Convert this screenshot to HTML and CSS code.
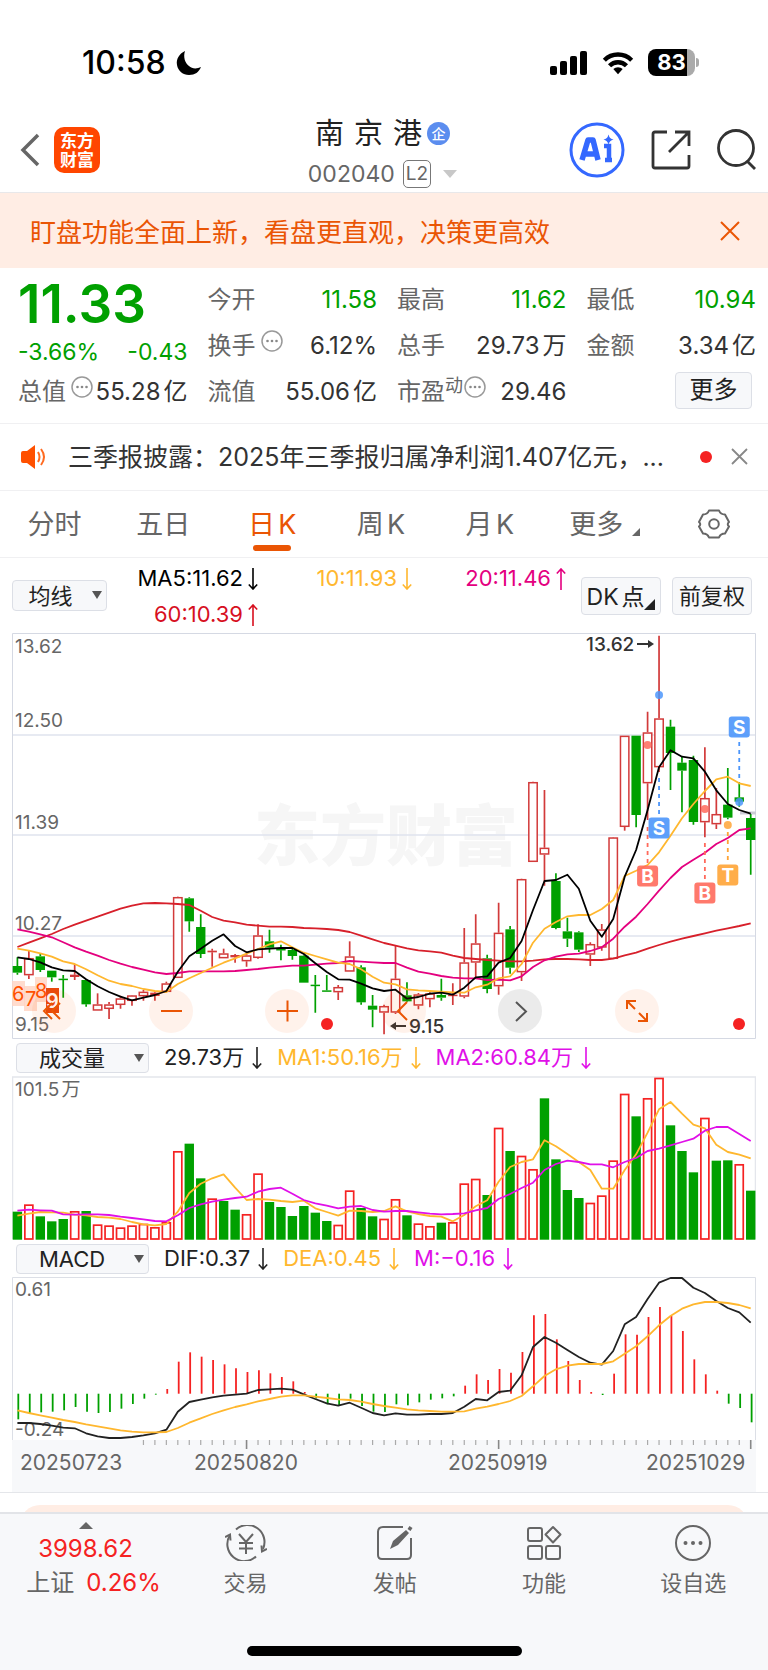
FILE: index.html
```html
<!DOCTYPE html>
<html lang="zh-CN">
<head>
<meta charset="utf-8">
<meta name="viewport" content="width=device-width, initial-scale=1">
<title>南京港 002040</title>
<link rel="stylesheet" href="styles.css">
</head>
<body>
<div class="app">
  <div class="status">
    <div class="status-side">
      <span class="clock">10:58</span>
      <svg width="26" height="26" viewBox="0 0 26 26"><path d="M9 1C3 4 0 9 1 15c1 6 6 10 12 10 6 0 10-3 12-8-4 2-9 2-12-1C9 13 7 7 9 1z" fill="#000"/></svg>
    </div>
    <div class="status-side status-right">
      <svg width="38" height="24" viewBox="0 0 38 24"><rect x="0" y="15" width="7" height="9" rx="2"/><rect x="10" y="10" width="7" height="14" rx="2"/><rect x="20" y="5" width="7" height="19" rx="2"/><rect x="30" y="0" width="7" height="24" rx="2"/></svg>
      <svg width="32" height="24" viewBox="0 0 34 25"><g fill="none" stroke="#000" stroke-width="4.6"><path d="M2.500 9.500a20.500 20.500 0 0 1 29 0"/><path d="M8 15.500a12.500 12.500 0 0 1 18 0"/></g><path d="M17 24.500l-5-5.500a7 7 0 0 1 10 0z"/></svg>
      <div class="battery"><span class="battery-level">83</span></div>
    </div>
  </div>

  <header class="header">
    <div class="header-left">
      <button class="icon-btn" aria-label="返回"><svg width="20" height="34" viewBox="0 0 20 34"><path d="M18 2L3 17l15 15" fill="none" stroke="#666" stroke-width="3.500"/></svg></button>
      <div class="logo">东方<br>财富</div>
    </div>
    <div class="title-block">
      <h1 class="title"><span>南</span><span>京</span><span>港</span><i class="corp">企</i></h1>
      <div class="code"><span>002040</span><span class="level">L2</span><svg width="14" height="8" viewBox="0 0 14 8"><path d="M0 0h14L7 8z" fill="#c8c8c8"/></svg></div>
    </div>
    <div class="header-right">
      <button class="icon-btn" aria-label="Ai"><svg width="56" height="56" viewBox="0 0 56 56"><circle cx="28" cy="28" r="26" fill="#fff" stroke="#3468ff" stroke-width="3"/><path d="M13 38L19 18h5l5 20M15.500 32h11" fill="none" stroke="#3468ff" stroke-width="5.500" stroke-linejoin="round"/><path d="M35 24h5v14h3M36 38h4" fill="none" stroke="#3468ff" stroke-width="4.500"/><path d="M39.500 12.500q1 4.500 5 5-4 1-5 5-1-4-5-5 4-.5 5-5z" fill="#3468ff"/></svg></button>
      <button class="icon-btn" aria-label="分享"><svg width="40" height="40" viewBox="0 0 40 40"><g fill="none" stroke="#333" stroke-width="2.800"><path d="M16 2H4Q2 2 2 4v32q0 2 2 2h32q2 0 2-2V25"/><path d="M24 2h14v14M37 3L18 22"/></g></svg></button>
      <button class="icon-btn" aria-label="搜索"><svg width="40" height="42" viewBox="0 0 40 42"><g fill="none" stroke="#333" stroke-width="2.800"><circle cx="19" cy="19" r="17.500"/><path d="M30 32l8 8"/></g></svg></button>
    </div>
  </header>

  <div class="banner">
    <span>盯盘功能全面上新，看盘更直观，决策更高效</span>
    <button class="icon-btn" aria-label="关闭"><svg width="20" height="20" viewBox="0 0 20 20"><path d="M1 1l18 18M19 1L1 19" stroke="#ea5504" stroke-width="2"/></svg></button>
  </div>

  <section class="quote">
    <div class="price-cell">
      <div class="price">11.33</div>
      <div class="change"><span>-3.66%</span><span>-0.43</span></div>
    </div>
    <div class="cell"><span class="label">今开</span><span class="down">11.58</span></div>
    <div class="cell"><span class="label">最高</span><span class="down">11.62</span></div>
    <div class="cell"><span class="label">最低</span><span class="down">10.94</span></div>
    <div class="cell"><span class="label">换手<svg class="info" width="22" height="22" viewBox="0 0 22 22"><use href="#dots"/></svg></span><span>6.12%</span></div>
    <div class="cell"><span class="label">总手</span><span>29.73万</span></div>
    <div class="cell"><span class="label">金额</span><span>3.34亿</span></div>
    <div class="cell"><span class="label">总值<svg class="info" width="22" height="22" viewBox="0 0 22 22"><use href="#dots"/></svg></span><span>55.28亿</span></div>
    <div class="cell"><span class="label">流值</span><span>55.06亿</span></div>
    <div class="cell"><span class="label">市盈<small>动</small><svg class="info tight" width="22" height="22" viewBox="0 0 22 22"><g id="dots"><circle cx="11" cy="11" r="10" fill="none" stroke="#999" stroke-width="1.500"/><circle cx="6.500" cy="11" r="1.300" fill="#888"/><circle cx="11" cy="11" r="1.300" fill="#888"/><circle cx="15.500" cy="11" r="1.300" fill="#888"/></g></svg></span><span>29.46</span></div>
    <div class="cell cell-more"><button class="box-btn more">更多</button></div>
  </section>

  <div class="notice">
    <svg width="26" height="24" viewBox="0 0 26 24"><path d="M1 8q0-2 2-2h4l8-6v24l-8-6H3q-2 0-2-2z" fill="#ff5000"/><path d="M18 7q3 5 0 10M21 4q6 8 0 16" fill="none" stroke="#ff6a20" stroke-width="2"/></svg>
    <a class="notice-text" href="#">三季报披露：2025年三季报归属净利润1.407亿元，...</a>
    <span class="dot"></span>
    <button class="icon-btn" aria-label="关闭"><svg width="17" height="17" viewBox="0 0 17 17"><path d="M1 1l15 15M16 1L1 16" stroke="#888" stroke-width="1.800"/></svg></button>
  </div>

  <nav class="tabs">
    <button class="tab">分时</button>
    <button class="tab">五日</button>
    <button class="tab active">日K</button>
    <button class="tab">周K</button>
    <button class="tab">月K</button>
    <button class="tab tab-more">更多<svg width="8" height="8" viewBox="0 0 8 8"><path d="M8 0v8H0z" fill="#666"/></svg></button>
    <button class="tab tab-gear" aria-label="设置"><svg width="32" height="30" viewBox="0 0 32 30"><g fill="none" stroke="#666" stroke-width="2"><path d="M11 1.500h10q1.500 4 6 4l4 7.500q-2.500 2 0 4.500l-4 7q-4.500 0-6 4H11q-1.500-4-6-4l-4-7q2.500-2.500 0-4.500l4-7.500q4.500 0 6-4z" stroke-linejoin="round"/><circle cx="16" cy="15" r="4.800"/></g></svg></button>
  </nav>

  <div class="ma-row">
    <div class="pick pick-small"><select aria-label="均线"><option>均线</option></select></div>
    <div class="ma-values">
      <span class="c-black">MA5:11.62<svg class="arrow" viewBox="0 0 10 22"><path id="arrow-down" d="M5 0v21M.8 16.500L5 21l4.200-4.500"/></svg></span>
      <span class="c-orange">10:11.93<svg class="arrow" viewBox="0 0 10 22"><use href="#arrow-down"/></svg></span>
      <span class="c-pink">20:11.46<svg class="arrow" viewBox="0 0 10 22"><path id="arrow-up" d="M5 22V1M.8 5.500L5 1l4.200 4.500"/></svg></span>
      <span class="c-red">60:10.39<svg class="arrow" viewBox="0 0 10 22"><use href="#arrow-up"/></svg></span>
    </div>
    <button class="box-btn dk">DK点<svg width="11" height="11" viewBox="0 0 11 11"><path d="M11 0v11H0z" fill="#222"/></svg></button>
    <button class="box-btn fq">前复权</button>
  </div>

  <div class="chart">
    <svg id="kline" viewBox="0 0 744 406">
      <text class="watermark" x="242" y="227">东方财富</text>
      <g stroke="#dfe3ee" stroke-width="1.500"><path d="M0 102h744M0 202h744M0 303h744"/></g>
      <path d="M.5.5h743v405H.5z" fill="none" stroke="#d5d9e3"/>
      <g class="axis-text">
        <text x="3" y="20">13.62</text><text x="3" y="94">12.50</text><text x="3" y="196">11.39</text><text x="3" y="297">10.27</text><text x="3" y="398">9.15</text>
      </g>
      <path d="M728 180h16" stroke="#ccccd6" stroke-width="3"/>
      <g id="kline-plot"></g>
      <g class="extreme">
        <text x="574" y="18">13.62</text><path d="M625 11h14" stroke="#333" stroke-width="2"/><path d="M636 7l6 4-6 4z"/>
        <path d="M380 393h14" stroke="#333" stroke-width="2"/><path d="M384 389l-6 4 6 4z"/><text x="397" y="400">9.15</text>
      </g>
      <g id="signals"></g>
      <g class="nine">
        <g fill="#ffd3c2" fill-opacity=".8"><rect x="0" y="348" width="13" height="25"/><rect x="12" y="353" width="13" height="25"/><rect x="23" y="344" width="12" height="25"/></g>
        <rect x="34" y="355" width="13" height="25" fill="#e8480c"/>
        <text x="0" y="368">6</text><text x="13" y="373">7</text><text x="23" y="365">8</text><text x="34" y="375" class="nine-last">9</text>
      </g>
      <g fill="#f52222"><circle cx="315" cy="391" r="6"/><circle cx="727" cy="391" r="6"/></g>
    </svg>
    <div class="tools">
      <button class="tool" aria-label="快退"><svg width="44" height="44" viewBox="0 0 44 44"><path d="M20 14l-8 8 8 8M28 14l-8 8 8 8"/></svg></button>
      <button class="tool" aria-label="缩小"><svg width="44" height="44" viewBox="0 0 44 44"><path d="M12 22h21"/></svg></button>
      <button class="tool" aria-label="放大"><svg width="44" height="44" viewBox="0 0 44 44"><path d="M12 22h21M22.500 11.500v21"/></svg></button>
      <button class="tool" aria-label="左移"><svg width="44" height="44" viewBox="0 0 44 44"><path d="M25 13l-9 9 9 9"/></svg></button>
      <button class="tool tool-grey" aria-label="右移"><svg width="44" height="44" viewBox="0 0 44 44"><path d="M18 13l10 9.500L18 32"/></svg></button>
      <button class="tool" aria-label="全屏"><svg width="44" height="44" viewBox="0 0 44 44"><path d="M12 20v-8h9M12 12l8 8M32 24v8h-9M32 32l-8-8"/></svg></button>
    </div>
  </div>

  <div class="sub-row">
    <div class="pick"><select aria-label="副图指标一"><option>成交量</option></select></div>
    <span class="c-dark">29.73万<svg class="arrow" viewBox="0 0 10 22"><use href="#arrow-down"/></svg></span>
    <span class="c-orange">MA1:50.16万<svg class="arrow" viewBox="0 0 10 22"><use href="#arrow-down"/></svg></span>
    <span class="c-violet">MA2:60.84万<svg class="arrow" viewBox="0 0 10 22"><use href="#arrow-down"/></svg></span>
  </div>
  <div class="chart">
    <svg id="volume" viewBox="0 0 744 164">
      <path d="M.5 163V1h743v162" fill="none" stroke="#e4e6ec" stroke-width="1.500"/>
      <g id="volume-plot"></g>
      <text class="axis-text" x="3" y="20">101.5万</text>
    </svg>
  </div>
  <div class="sub-row">
    <div class="pick"><select aria-label="副图指标二"><option>MACD</option></select></div>
    <span class="c-dark">DIF:0.37<svg class="arrow" viewBox="0 0 10 22"><use href="#arrow-down"/></svg></span>
    <span class="c-orange">DEA:0.45<svg class="arrow" viewBox="0 0 10 22"><use href="#arrow-down"/></svg></span>
    <span class="c-violet">M:−0.16<svg class="arrow" viewBox="0 0 10 22"><use href="#arrow-down"/></svg></span>
  </div>
  <div class="chart">
    <svg id="macd" viewBox="0 0 744 163">
      <path d="M.5 163V.5h743V163" fill="none" stroke="#dcdfe6"/>
      <g class="axis-text"><text x="3" y="19">0.61</text><text x="3" y="159">-0.24</text></g>
      <g id="macd-plot"></g>
    </svg>
    <svg class="dates" id="dates" viewBox="0 0 744 52">
      <text x="8" y="30">20250723</text><text x="182" y="30">20250820</text><text x="436" y="30">20250919</text><text x="634" y="30">20251029</text>
    </svg>
  </div>

  <div class="peek"><div class="peek-card"></div></div>

  <footer class="footer">
    <div class="foot-items">
      <a class="index" href="#">
        <svg width="14" height="7" viewBox="0 0 14 7"><path d="M7 0l7 7H0z" fill="#666"/></svg>
        <span class="up">3998.62</span>
        <span class="index-row"><span>上证</span><span class="up">0.26%</span></span>
      </a>
      <a class="foot" href="#"><svg width="42" height="36" viewBox="0 0 42 36"><g fill="none" stroke="#666" stroke-width="2"><path d="M11 4.500A17 17 0 0 1 38 24M31 31.500A17 17 0 0 1 5 10"/><path d="M0 12l5-2.500.5 6M42 24l-5 2.500-.5-6"/><path d="M14 9l7 8 7-8M21 17v12M14 18h14M14 23.500h14"/></g></svg>交易</a>
      <a class="foot" href="#"><svg width="42" height="36" viewBox="0 0 42 36"><g fill="none" stroke="#666" stroke-width="2"><path d="M29 2H9Q4 2 4 7v23q0 4 4 4h25q4 0 4-4V13"/></g><path d="M16 24l3-8L32 5l3 3-11 12zM33.500 4l2-3 3 2-2 3z" fill="#666"/></svg>发帖</a>
      <a class="foot" href="#"><svg width="42" height="36" viewBox="0 0 42 36"><g fill="none" stroke="#666" stroke-width="2"><rect x="5" y="3" width="14" height="13" rx="2"/><rect x="5" y="21" width="14" height="13" rx="2"/><rect x="23" y="21" width="14" height="13" rx="2"/><path d="M30 2l7.500 7.500L30 17.500 22.500 9.500z" stroke-linejoin="round"/></g></svg>功能</a>
      <a class="foot" href="#"><svg width="42" height="36" viewBox="0 0 42 36"><circle cx="21" cy="18" r="17" fill="none" stroke="#666" stroke-width="2"/><g fill="#666"><circle cx="13.500" cy="18" r="2"/><circle cx="21" cy="18" r="2"/><circle cx="28.500" cy="18" r="2"/></g></svg>设自选</a>
    </div>
    <div class="home"></div>
  </footer>
</div>
<script src="charts.js"></script>
</body>
</html>
```

FILE: styles.css
```css
* { box-sizing: border-box; }
body {
  margin: 0;
  background: #fff;
  color: #333;
  font-family: Inter, "Noto Sans CJK SC", sans-serif;
  font-size: 24px;
}
button, select { font: inherit; color: inherit; }
button { border: 0; padding: 0; background: none; }
a { color: inherit; text-decoration: none; }
svg { display: block; flex: none; }
.app { display: flex; flex-direction: column; min-height: 100vh; }

.status { display: flex; justify-content: space-between; align-items: center; height: 100px; padding: 25px 73px 0 82px; }
.status-side { display: flex; align-items: center; gap: 10px; }
.status-right { gap: 14px; }
.clock { font-size: 32px; font-weight: 500; color: #000; }
.battery { position: relative; width: 47px; height: 27px; border-radius: 8px; background: linear-gradient(90deg, #000 39px, #aaa 39px); }
.battery::after { content: ""; position: absolute; right: -4px; top: 9px; width: 3px; height: 9px; border-radius: 0 3px 3px 0; background: #aaa; }
.battery-level { display: block; color: #fff; font-size: 22px; font-weight: 700; line-height: 27px; text-align: center; }

.header { display: grid; grid-template-columns: 1fr auto 1fr; align-items: center; height: 93px; padding: 8px 11px 0 20px; border-bottom: 1px solid #e8e8ea; }
.header-left, .header-right { display: flex; align-items: center; }
.header-left { gap: 14px; }
.header-right { justify-content: flex-end; gap: 26px; }
.logo { width: 46px; height: 46px; padding-top: 3px; border-radius: 10px; background: #ff4600; color: #fff; font-family: "Noto Sans CJK SC", sans-serif; font-size: 17px; font-weight: 700; line-height: 19px; text-align: center; }
.title-block { display: flex; flex-direction: column; align-items: center; gap: 7px; padding: 2px 12px 0 0; }
.title { display: flex; align-items: center; gap: 10px; margin: 0; font-size: 29px; font-weight: 400; line-height: 38px; color: #222; }
.corp { display: block; width: 23px; height: 23px; margin-left: -5px; border-radius: 50%; background: #5b8def; color: #fff; font-size: 14px; font-style: normal; font-weight: 500; line-height: 23px; text-align: center; }
.code { display: flex; align-items: center; gap: 8px; font-size: 23px; line-height: 28px; color: #666; }
.level { padding: 0 2px; border: 1px solid #777; border-radius: 5px; font-size: 19px; line-height: 26px; }
.code svg { margin-left: 4px; }

.banner { display: flex; justify-content: space-between; align-items: center; height: 75px; padding: 0 28px 0 30px; background: #ffede4; color: #ea5504; font-size: 26px; }

.quote { display: grid; grid-template-columns: repeat(4, 1fr); grid-auto-rows: 46px; column-gap: 20px; padding: 9px 12px 8px 18px; border-bottom: 1px solid #f0f0f2; text-autospace: normal; }
.price-cell { grid-row: span 2; color: #00a000; }
.price { font-size: 53px; font-weight: 600; line-height: 54px; }
.change { display: flex; justify-content: space-between; font-size: 23px; line-height: 42px; }
.cell { display: flex; justify-content: space-between; align-items: center; line-height: 32px; white-space: nowrap; }
.label { display: flex; align-items: center; color: #666; }
.label small { align-self: flex-start; font-size: 18px; line-height: 20px; }
.info { margin: 0 0 10px 5px; }
.info.tight { margin-left: 1px; }
.down { color: #00a000; }
.up { color: #f52222; }
.cell-more { justify-content: flex-end; padding: 0 4px 4px 0; }
.box-btn { border: 1px solid #dcdfe6; border-radius: 4px; background: #f7f8fa; color: #222; font-size: 23px; white-space: nowrap; text-autospace: normal; }
.more { width: 77px; height: 37px; font-size: 24px; line-height: 32px; }

.notice { display: flex; align-items: center; height: 67px; padding: 0 20px 4px; border-bottom: 1px solid #f0f0f2; font-size: 25px; }
.notice svg, .notice .dot { margin-top: 3px; }
.notice-text { flex: 1; margin: 0 30px 0 22px; white-space: nowrap; }
.dot { width: 12px; height: 12px; margin-right: 19px; border-radius: 50%; background: #f52222; }

.tabs { display: flex; align-items: stretch; height: 67px; border-bottom: 1px solid #f0f0f2; color: #666; font-size: 27px; text-autospace: normal; }
.tab { position: relative; flex: 1; padding-bottom: 4px; }
.tab.active { color: #ea5504; }
.tab.active::after { content: ""; position: absolute; left: 50%; bottom: 6px; width: 38px; height: 6px; margin-left: -19px; border-radius: 3px; background: #ea5504; }
.tab-more { display: flex; justify-content: center; align-items: center; gap: 9px; padding-left: 6px; }
.tab-more svg { margin-top: 20px; }
.tab-gear { display: flex; justify-content: center; align-items: center; padding-bottom: 0; }

.ma-row { display: flex; align-items: center; height: 75px; padding: 0 16px 0 12px; font-size: 22px; }
.ma-values { display: grid; grid-template-columns: 122px 1fr 1fr; flex: 1; margin: 0 15px 0 29px; line-height: 36px; text-align: right; white-space: nowrap; }
.dk { display: flex; justify-content: center; align-items: flex-end; width: 80px; height: 38px; line-height: 34px; }
.dk svg { margin-bottom: 4px; }
.fq { width: 80px; height: 38px; margin-left: 11px; font-size: 22px; line-height: 34px; }
.pick { position: relative; width: 133px; height: 30px; }
.pick select { display: block; width: 100%; height: 100%; padding: 0 21px 0 0; border: 1px solid #dcdfe6; border-radius: 4px; background: #f7f8fa; color: #222; font-size: 22px; line-height: 28px; text-align: center; text-align-last: center; appearance: none; }
.pick::after { content: ""; position: absolute; right: 5px; top: 11px; border: 5px solid transparent; border-top: 8px solid #555; border-bottom: 0; pointer-events: none; }
.pick-small { width: 95px; height: 31px; }
.pick-small select { padding-right: 18px; }
.arrow { display: inline-block; width: 10px; height: 22px; margin-left: 5px; vertical-align: -4px; fill: none; stroke: currentColor; stroke-width: 1.600; }
.sub-row .arrow { margin-left: 8px; }

.c-black { color: #000; }
.c-dark { color: #222; }
.c-orange { color: #ffb72e; }
.c-pink { color: #e4007f; }
.c-red { color: #d7101f; }
.c-violet { color: #e010e8; }

.chart { position: relative; margin: 0 12px; }
.chart > svg { width: 100%; }
.axis-text { fill: #666; font-size: 19px; text-autospace: normal; }
.watermark { fill: #f6f6f6; font-size: 66px; font-weight: 900; }
.extreme { fill: #333; font-size: 19px; font-weight: 500; }
.nine { fill: #ff5000; font-size: 20px; }
.nine-last { fill: #fff; font-weight: 600; }
.signal-text { fill: #fff; font-size: 19px; font-weight: 700; text-anchor: middle; }
.tools { position: absolute; left: 20px; right: 97px; bottom: 6px; display: flex; justify-content: space-between; }
.tool { width: 44px; height: 44px; border-radius: 50%; background: rgba(255, 90, 0, 0.08); }
.tool path { fill: none; stroke: #ea5504; stroke-width: 2; }
.tool-grey { background: rgba(0, 0, 0, 0.08); }
.tool-grey path { stroke: #555; }
.sub-row { display: flex; align-items: center; gap: 15px; height: 37px; padding: 0 16px; font-size: 22px; line-height: 37px; white-space: nowrap; }
.dates { background: #f7f8fa; fill: #666; font-size: 21px; }

.peek { flex: 1; min-height: 19px; padding: 12px 20px 0; border-top: 1px solid #e4e6ea; overflow: hidden; }
.peek-card { height: 40px; margin-bottom: -33px; border-radius: 20px; background: #ffede4; }

.footer { position: relative; height: 159px; border-top: 2px solid #e2e4e8; background: #f7f8fa; color: #666; }
.foot-items { display: flex; padding-top: 7px; }
.index { display: flex; flex-direction: column; align-items: center; width: 171px; line-height: 34px; white-space: nowrap; }
.index svg { margin: 1px 0 3px; }
.index-row { display: flex; gap: 12px; padding-left: 16px; }
.foot { display: flex; flex: 1; flex-direction: column; align-items: center; gap: 4px; padding-top: 4px; font-size: 22px; line-height: 36px; }
.home { position: absolute; left: 50%; bottom: 15px; width: 275px; height: 10px; margin-left: -137px; border-radius: 5px; background: #000; }
```

FILE: charts.js
```js
const NS = 'http://www.w3.org/2000/svg';
const STEP = 11.458;
const X0 = 5.4;
const RED = '#d23a3a';
const GREEN = '#00a000';
const xAt = i => X0 + i * STEP;

function add(parent, name, attrs, text) {
  const el = document.createElementNS(NS, name);
  for (const key in attrs) el.setAttribute(key, attrs[key]);
  if (text) el.textContent = text;
  parent.appendChild(el);
  return el;
}

/* Values are stored at three units per drawing unit; each run has its own base. */
const unify = runs => runs.flatMap(([base, values]) => values.map(v => (v + base) / 3));

function line(parent, values, color, width = 2) {
  add(parent, 'polyline', {
    points: values.map((y, i) => xAt(i).toFixed(1) + ',' + y.toFixed(1)).join(' '),
    fill: 'none', stroke: color, 'stroke-width': width, 'stroke-linejoin': 'round'
  });
}

/* Candles: direction, high, body top, body bottom, low */
const candles = [
  [741, `G232,258,278,284 R213,234,286,297 G222,229,270,276 G272,272,292,305 G285,296,299,353 R252,284,291,300
  G298,300,373,380 R340,373,392,392 R366,373,387,417 R347,355,375,386 R345,346,363,377 R330,335,349,362 R336,338,348,362
  R305,310,336,336 R50,51,294,294 G52,55,124,155 G103,141,222,234 R206,212,217,260 R206,220,235,235 R222,225,232,248
  R218,226,244,260 R133,166,234,236 G149,184,203,218 G194,207,211,241 G206,210,228,239 G226,227,308,308 G285,314,318,398
  G285,331,334,334 R315,321,337,360 R184,229,275,275 G256,262,367,374 G345,377,389,442 R374,378,398,463`],
  [381, `R557,656,758,762 G667,706,724,726 R699,703,737,748 R697,700,718,742 G656,705,713,722 R670,704,707,735
  R504,607,710,715 R463,550,608,652 G584,595,687,700 R428,518,679,704 G498,508,623,641 R356,357,637,663 R65,66,306,306
  R90,263,284,377 G340,363,504,508 G473,514,536,561 G514,517,569,576 R547,552,584,618 R492,508,563,572 R231,232,597,597`],
  [-39, `R347,347,621,632 G347,347,585,622 R275,337,490,600 R47,295,442,456 G299,320,399,510 G410,428,452,577
  G407,420,606,614 R382,534,607,652 R504,582,613,627 G444,554,593,598 G487,532,545,560 G582,594,660,764`]
].flatMap(([base, rows]) => rows.trim().split(/\s+/).map(r => ({
  up: r[0] === 'R',
  v: r.slice(1).split(',').map(n => (Number(n) + base) / 3)
})));

const kline = document.getElementById('kline-plot');
candles.forEach(({ up, v: [high, top, bottom, low] }, i) => {
  const x = xAt(i);
  const color = up ? RED : GREEN;
  add(kline, 'path', { d: `M${x} ${high}V${top}M${x} ${bottom}V${low}`, stroke: color, 'stroke-width': 1.7 });
  if (up && bottom - top > 4) {
    add(kline, 'rect', { x: x - 4.2, y: top + 0.7, width: 8.4, height: bottom - top - 1.4, fill: '#fff', stroke: color, 'stroke-width': 1.5 });
  } else {
    add(kline, 'rect', { x: x - 4.7, y: top, width: 9.4, height: Math.max(bottom - top, 1.5), fill: color });
  }
});

line(kline, unify([
  [741, [201, 188, 175, 162, 147, 134, 122, 110, 98, 86, 77, 70, 69, 70, 72, 75, 92, 111, 122, 127, 134, 137, 140, 140, 141, 144, 145, 147, 150, 156, 167, 178, 189]],
  [381, [557, 565, 571, 574, 578, 587, 594, 597, 600, 602, 604, 604, 602, 598, 597, 597, 598, 600, 600, 596, 586, 578, 566, 555, 545, 536, 528, 520, 512, 505, 498, 490]]
]), '#d7202b', 1.8);
line(kline, unify([
  [741, [148, 155, 163, 172, 187, 202, 215, 227, 240, 251, 261, 269, 277, 282, 279, 274, 274, 274, 274, 273, 270, 267, 263, 260, 257, 257, 254, 251, 249, 243, 245, 247, 249]],
  [381, [609, 623, 635, 641, 648, 653, 655, 655, 660, 659, 661, 649, 621, 601, 590, 583, 581, 573, 562, 536, 500, 470, 432, 392, 354, 321, 299, 278, 252, 234, 210, 205]]
]), '#e4007f', 1.8);
line(kline, unify([
  [741, [206, 212, 220, 230, 244, 252, 268, 286, 302, 312, 318, 327, 333, 336, 312, 295, 279, 263, 248, 235, 221, 207, 193, 184, 202, 218, 228, 238, 248, 252, 268, 290, 308]],
  [381, [673, 688, 691, 693, 695, 697, 698, 682, 674, 655, 649, 612, 548, 506, 486, 469, 465, 465, 447, 420, 348, 332, 315, 277, 227, 175, 132, 93, 58, 50, 70, 78]]
]), '#ffb72e', 1.8);
line(kline, unify([
  [741, [232, 237, 247, 262, 271, 273, 298, 319, 336, 350, 361, 353, 345, 333, 275, 229, 206, 182, 163, 198, 217, 208, 206, 204, 204, 222, 250, 276, 298, 299, 311, 325, 333]],
  [381, [689, 716, 711, 701, 698, 704, 683, 652, 649, 608, 594, 543, 450, 363, 360, 344, 386, 482, 530, 477]],
  [-39, [770, 690, 570, 442, 391, 410, 415, 455, 511, 552, 570, 581]]
]), '#000', 1.8);

/* Trade signals: letter, candle index, label centre, dot, dash span */
const signals = document.getElementById('signals');
[
  ['B', 55, 243, 112, 194, 231, '#ff6a5c'],
  ['S', 56, 195, 62, 145, 181, '#4c96fb'],
  ['B', 60, 260, 176, 210, 246, '#ff6a5c'],
  ['T', 62, 242, 192, 199, 230, '#ffa436'],
  ['S', 63, 94, 169, 109, 145, '#4c96fb']
].forEach(([letter, i, y, dot, from, to, color]) => {
  const x = xAt(i);
  add(signals, 'circle', { cx: x, cy: dot, r: 4, fill: color, 'fill-opacity': 0.85 });
  add(signals, 'path', { d: `M${x} ${from}V${to}`, stroke: color, 'stroke-width': 1.8, 'stroke-dasharray': '4 4' });
  add(signals, 'rect', { x: x - 10.5, y: y - 10.5, width: 21, height: 21, rx: 3, fill: color, 'fill-opacity': 0.9 });
  add(signals, 'text', { x, y: y + 7, class: 'signal-text' }, letter);
});

/* Volume */
const volume = document.getElementById('volume-plot');
`G527 R506 G541 G556 G549 R526 G525 R566 R569 R575 R569 R564 R574 R559 R346 G323 G427 R488 G495 G521 R535 R413 G498 G513 G540 G510 G530 G555 R567 R464 G516 G541 R549
R490 G538 R563 R571 G560 R559 R443 R429 G477 R276 G345 R360 R400 G187 G370 G462 G486 R501 R479 R374 R174 G241 R187 R126 G268 G345 G409 R246 G374 G373 R385 G464`
  .split(/\s+/).forEach((bar, i) => {
    const y = Number(bar.slice(1)) / 3 - 40;
    const x = xAt(i);
    if (bar[0] === 'R') {
      add(volume, 'rect', { x: x - 4, y: y + 0.5, width: 8, height: 162.5 - y, fill: '#fff', stroke: '#f52222', 'stroke-width': 1.7 });
    } else {
      add(volume, 'rect', { x: x - 4.7, y, width: 9.4, height: 163.7 - y, fill: GREEN });
    }
  });
line(volume, unify([[-120, [539, 533, 528, 529, 530, 536, 538, 543, 545, 549, 558, 565, 568, 564, 527, 471, 443, 427, 415, 455, 492, 489, 491, 495, 498, 494, 517, 528, 539, 524, 525, 528, 525, 511, 526, 534, 540, 542, 556, 537, 511, 493, 437, 393, 378, 370, 313, 331, 354, 378, 402, 458, 458, 402, 355, 290, 220, 198, 233, 266, 277, 326, 348, 356, 367]]]), '#ffb72e', 1.8);
line(volume, unify([[-120, [524, 521, 523, 524, 535, 536, 535, 535, 537, 542, 546, 550, 555, 556, 538, 516, 505, 497, 491, 486, 482, 467, 459, 455, 473, 492, 502, 509, 517, 512, 510, 522, 527, 525, 525, 529, 533, 535, 534, 532, 523, 516, 489, 474, 456, 440, 402, 384, 374, 378, 385, 385, 394, 378, 366, 345, 338, 328, 318, 308, 284, 273, 273, 294, 315]]]), '#e010e8', 1.8);

/* MACD */
const macd = document.getElementById('macd-plot');
const ZERO = 116.7;
unify([[-108, [535, 519, 514, 512, 508, 498, 512, 516, 513, 503, 489, 473, 461, 444, 362, 334, 347, 357, 370, 382, 393, 388, 397, 408, 421, 453, 472, 490, 492, 473, 495, 512, 513, 490, 493, 484, 476, 472, 466, 434, 400, 417, 384, 395, 333, 223, 219, 295, 360, 417, 453, 462, 398, 280, 281, 228, 198, 225, 270, 355, 400, 449, 488, 501, 544]]])
  .forEach((y, i) => add(macd, 'path', { d: `M${xAt(i) + 0.9} ${ZERO}V${y}`, stroke: y < ZERO ? '#f52222' : GREEN, 'stroke-width': 1.8 }));
line(macd, unify([[-108, [546, 546, 549, 554, 560, 562, 577, 586, 591, 591, 588, 583, 577, 566, 512, 483, 476, 469, 464, 461, 458, 447, 445, 443, 446, 460, 474, 487, 494, 485, 500, 516, 523, 517, 521, 521, 519, 519, 516, 497, 474, 478, 453, 449, 403, 318, 288, 305, 327, 348, 365, 371, 330, 250, 228, 174, 125, 111, 111, 140, 156, 180, 201, 214, 245]]]), '#222', 1.8);
line(macd, unify([[-108, [508, 516, 523, 530, 537, 543, 550, 556, 562, 568, 572, 574, 574, 573, 561, 545, 532, 519, 508, 498, 490, 481, 474, 467, 463, 463, 467, 471, 475, 477, 482, 489, 495, 500, 505, 508, 510, 512, 512, 511, 503, 497, 489, 480, 465, 436, 405, 385, 374, 369, 369, 369, 361, 338, 316, 286, 253, 225, 203, 190, 183, 183, 186, 192, 202]]]), '#ffb72e', 1.8);

/* Date ticks */
const dates = document.getElementById('dates');
for (let i = 11; i < 65; i++) {
  const major = i === 20 || i === 42 || i === 64;
  add(dates, 'path', { d: `M${xAt(i)} 0V${major ? 9 : 5}`, stroke: major ? '#888' : '#aaa', 'stroke-width': major ? 1.6 : 1.2 });
}
```
